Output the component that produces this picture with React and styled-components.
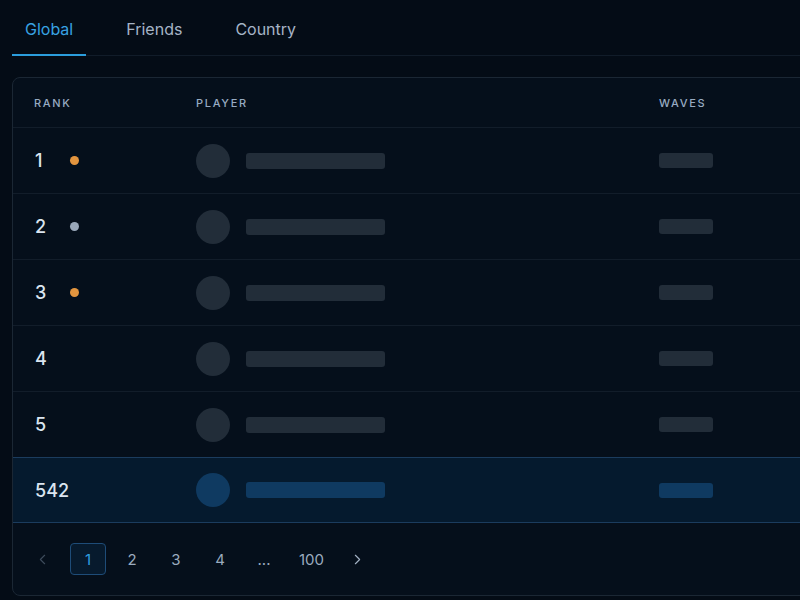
import React from 'react';
import styled, { createGlobalStyle } from 'styled-components';
import { ChevronLeft, ChevronRight } from 'lucide-react';

const Global = createGlobalStyle`
  html, body {
    margin: 0;
    background: #040c16;
    overflow: hidden;
  }
  body {
    font-family: Inter, "Noto Sans", sans-serif;
  }
`

const Page = styled.div`
  width: 800px;
  height: 600px;
  padding: 0 0 0 12px;
  box-sizing: border-box;
  overflow: hidden;
`

const Tabs = styled.div`
  display: flex;
  gap: 27px;
  height: 56px;
  padding-top: 3px;
  border-bottom: 1px solid #111c29;
  box-sizing: border-box;
`

const Tab = styled.div`
  display: flex;
  align-items: center;
  padding: 0 13px;
  font-size: 16px;
  color: ${p => (p.$active ? '#38a2e2' : '#a6b4c6')};
  border-bottom: 2px solid ${p => (p.$active ? '#2b9ddc' : 'transparent')};
  margin-bottom: -1px;
`

const Card = styled.div`
  margin-top: 21px;
  width: 900px;
  border: 1px solid #1b2734;
  border-radius: 8px;
  background: #050f1b;
  overflow: hidden;
`

const Row = styled.div`
  display: grid;
  grid-template-columns: 162px 463px 1fr;
  align-items: center;
  padding-left: 21px;
  height: ${p => p.$h}px;
  border-bottom: 1px solid ${p => (p.$me ? '#1b3c5e' : '#121d2a')};
  border-top: ${p => (p.$me ? '1px solid #1b3c5e' : 'none')};
  margin-top: ${p => (p.$me ? '-1px' : '0')};
  background: ${p => (p.$me ? '#051a2e' : 'transparent')};
  box-sizing: border-box;
`

const HeadCell = styled.div`
  font-size: 11px;
  font-weight: 500;
  letter-spacing: 1.7px;
  color: #98abc2;
`

const RankCell = styled.div`
  display: flex;
  align-items: center;
  font-size: 18px;
  font-weight: 500;
  color: #dbe5f0;
  padding-left: 1px;
`

const RankNum = styled.span`
  min-width: 35px;
`

const Dot = styled.span`
  width: 9px;
  height: 9px;
  border-radius: 50%;
  background: ${p => p.$c};
`

const PlayerCell = styled.div`
  display: flex;
  align-items: center;
  gap: 16px;
`

const Avatar = styled.div`
  width: 34px;
  height: 34px;
  border-radius: 50%;
  background: ${p => (p.$me ? '#0f3a61' : '#222d39')};
`

const Bar = styled.div`
  width: ${p => p.$w}px;
  height: ${p => p.$bh}px;
  border-radius: 3px;
  background: ${p => (p.$me ? '#0f3a61' : '#222d39')};
`

const Pager = styled.div`
  display: flex;
  align-items: center;
  height: 72px;
  padding-left: 17px;
  gap: 8px;
`

const PageBtn = styled.div`
  min-width: 36px;
  height: 32px;
  padding: 0 8px;
  box-sizing: border-box;
  display: flex;
  align-items: center;
  justify-content: center;
  border-radius: 4px;
  font-size: 15px;
  color: ${p => (p.$active ? '#2f9fe0' : '#9aabbf')};
  border: 1px solid ${p => (p.$active ? '#1e4c78' : 'transparent')};
  background: ${p => (p.$active ? '#071a2d' : 'transparent')};
`

const Arrow = styled.div`
  width: 24px;
  height: 32px;
  display: flex;
  align-items: center;
  justify-content: center;
  margin: ${p => (p.$dim ? '0 8px 0 0' : '0 0 0 4px')};
  color: ${p => (p.$dim ? '#3c4a5a' : '#a3b2c4')};
`

const rows = [
  { rank: '1', dot: '#e3953f' },
  { rank: '2', dot: '#9aa8ba' },
  { rank: '3', dot: '#e3953f' },
  { rank: '4' },
  { rank: '5' },
  { rank: '542', me: true },
];

export default function App() {
  return (
    <Page>
      <Global />
      <Tabs>
        <Tab $active>Global</Tab>
        <Tab>Friends</Tab>
        <Tab>Country</Tab>
      </Tabs>
      <Card>
        <Row $h={50}>
          <HeadCell>RANK</HeadCell>
          <HeadCell>PLAYER</HeadCell>
          <HeadCell>WAVES</HeadCell>
        </Row>
        {rows.map(r => (
          <Row key={r.rank} $h={66} $me={r.me}>
            <RankCell>
              <RankNum>{r.rank}</RankNum>
              {r.dot && <Dot $c={r.dot} />}
            </RankCell>
            <PlayerCell>
              <Avatar $me={r.me} />
              <Bar $w={139} $bh={16} $me={r.me} />
            </PlayerCell>
            <Bar $w={54} $bh={15} $me={r.me} />
          </Row>
        ))}
        <Pager>
          <Arrow $dim><ChevronLeft size={17} strokeWidth={1.6} /></Arrow>
          <PageBtn $active>1</PageBtn>
          <PageBtn>2</PageBtn>
          <PageBtn>3</PageBtn>
          <PageBtn>4</PageBtn>
          <PageBtn>...</PageBtn>
          <PageBtn>100</PageBtn>
          <Arrow><ChevronRight size={17} strokeWidth={1.6} /></Arrow>
        </Pager>
      </Card>
    </Page>
  );
}
